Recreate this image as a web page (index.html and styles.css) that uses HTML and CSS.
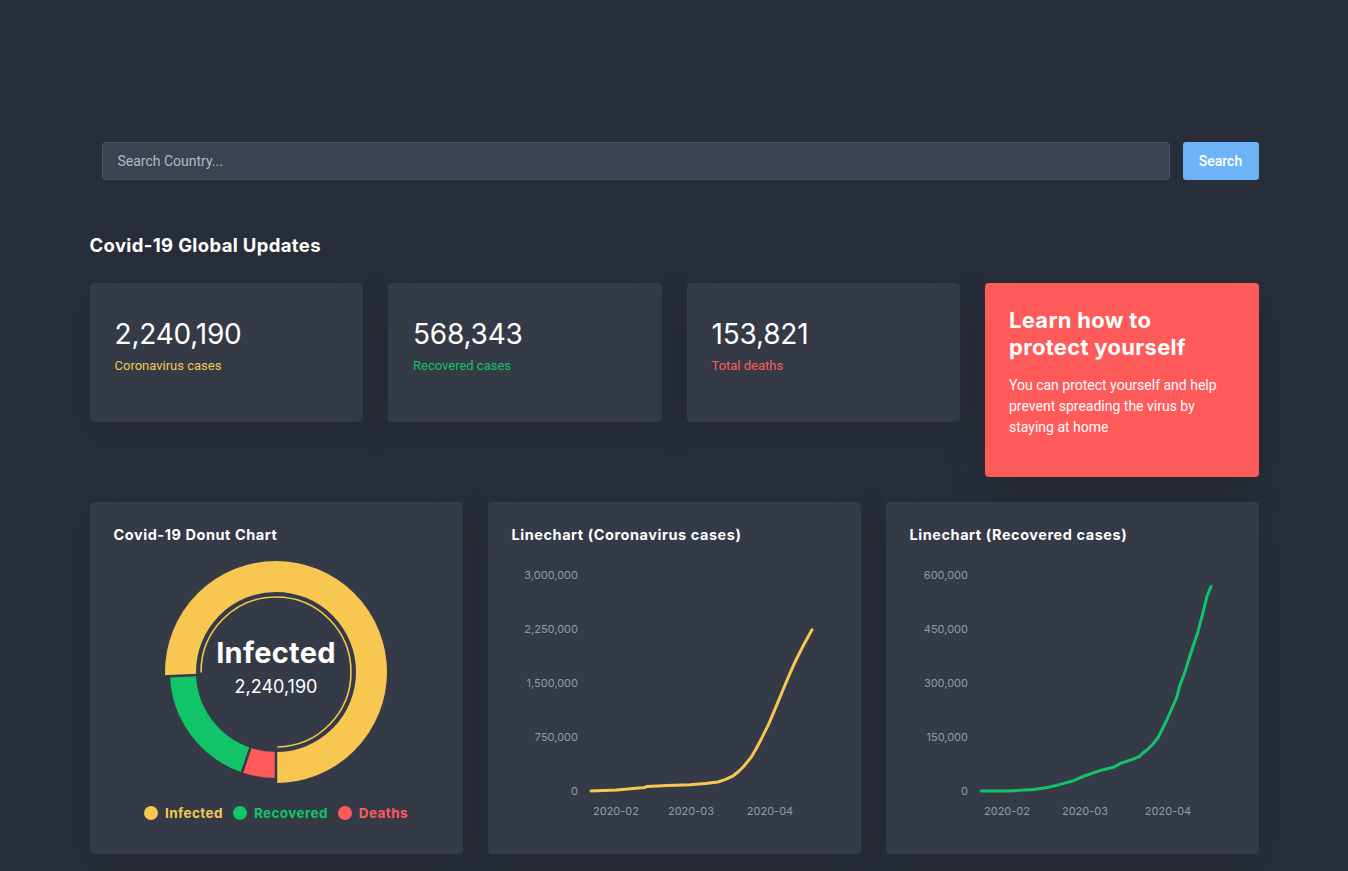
FILE: index.html
```html
<!DOCTYPE html>
<html lang="en">
<head>
<meta charset="utf-8">
<title>Covid-19 Global Updates</title>
<link rel="stylesheet" href="styles.css">
</head>
<body>
<main class="page">
  <form class="search" onsubmit="return false">
    <input class="search-input" type="text" placeholder="Search Country...">
    <button class="search-btn" type="submit">Search</button>
  </form>

  <h2 class="section-title">Covid-19 Global Updates</h2>

  <section class="stats">
    <div class="card stat">
      <div class="stat-num">2,240,190</div>
      <div class="stat-label yellow">Coronavirus cases</div>
    </div>
    <div class="card stat">
      <div class="stat-num">568,343</div>
      <div class="stat-label green">Recovered cases</div>
    </div>
    <div class="card stat">
      <div class="stat-num">153,821</div>
      <div class="stat-label red">Total deaths</div>
    </div>
    <div class="card promo">
      <h3 class="promo-title">Learn how to protect yourself</h3>
      <p class="promo-text">You can protect yourself and help prevent spreading the virus by staying at home</p>
    </div>
  </section>

  <section class="charts">
    <div class="card chart-card">
      <h4 class="chart-title">Covid-19 Donut Chart</h4>
      <div class="donut">
        <svg class="donut-svg" width="230" height="230" viewBox="0 0 230 230">
          <g transform="rotate(90 115 115)">
            <circle cx="115" cy="115" r="95.5" fill="none" stroke="#f7c752" stroke-width="31" stroke-dasharray="0 146.3 453.8 700"/>
            <circle cx="115" cy="115" r="93" fill="none" stroke="#12c468" stroke-width="26" stroke-dasharray="0 30.3 112.1 700"/>
            <circle cx="115" cy="115" r="93" fill="none" stroke="#ff5a5a" stroke-width="26" stroke-dasharray="30.3 700"/>
            <circle cx="115" cy="115" r="75" fill="none" stroke="#f7c752" stroke-width="1.6" stroke-dasharray="0 117 352 600"/>
          </g>
          <g stroke="#343a46" stroke-width="2.5">
            <line x1="115" y1="192" x2="115" y2="229"/>
            <line x1="90" y1="188.9" x2="78.8" y2="222"/>
            <line x1="37" y1="118" x2="1" y2="119.4"/>
          </g>
        </svg>
        <div class="donut-center">
          <div class="donut-label">Infected</div>
          <div class="donut-value">2,240,190</div>
        </div>
      </div>
      <ul class="legend">
        <li class="legend-item yellow"><span class="dot bg-yellow"></span>Infected</li>
        <li class="legend-item green"><span class="dot bg-green"></span>Recovered</li>
        <li class="legend-item red"><span class="dot bg-red"></span>Deaths</li>
      </ul>
    </div>

    <div class="card chart-card">
      <h4 class="chart-title">Linechart (Coronavirus cases)</h4>
      <svg class="line-svg" viewBox="0 0 372 270" width="372" height="270">
        <g class="axis" text-anchor="end">
          <text x="90" y="19">3,000,000</text>
          <text x="90" y="73">2,250,000</text>
          <text x="90" y="127">1,500,000</text>
          <text x="90" y="181">750,000</text>
          <text x="90" y="235">0</text>
        </g>
        <g class="axis" text-anchor="middle">
          <text x="128" y="255">2020-02</text>
          <text x="203" y="255">2020-03</text>
          <text x="282" y="255">2020-04</text>
        </g>
        <polyline fill="none" stroke="#f7c752" stroke-width="3" stroke-linejoin="round" stroke-linecap="round"
          points="103,231 128.4,230.1 153.8,227.8 157,227.4 158.9,226.4 179.2,225.6 202.1,224.8 217.3,223.6 230,222 237.6,219.4 245.2,215.8 250,212 255.4,206.7 263,197.4 268,189 273.2,179.2 280.8,163.9 291,139.6 297,125 303.7,109.3 308,100 316.4,83.4 324,69.7"/>
      </svg>
    </div>

    <div class="card chart-card">
      <h4 class="chart-title">Linechart (Recovered cases)</h4>
      <svg class="line-svg" viewBox="0 0 372 270" width="372" height="270">
        <g class="axis" text-anchor="end">
          <text x="82" y="19">600,000</text>
          <text x="82" y="73">450,000</text>
          <text x="82" y="127">300,000</text>
          <text x="82" y="181">150,000</text>
          <text x="82" y="235">0</text>
        </g>
        <g class="axis" text-anchor="middle">
          <text x="121" y="255">2020-02</text>
          <text x="199" y="255">2020-03</text>
          <text x="282" y="255">2020-04</text>
        </g>
        <polyline fill="none" stroke="#12c468" stroke-width="3" stroke-linejoin="round" stroke-linecap="round"
          points="95,231 121.4,230.9 147.9,229.6 161.1,227.6 174.3,224.4 187.5,220.6 198.1,216 214,210.6 227.2,207.3 235.1,203.2 245.7,199.7 253.6,196.5 256,193.8 261.6,189.5 267,184 272.1,177.5 280.1,161.5 285.4,149.6 290.7,137.4 294,125 298.6,112.9 303.9,96 311.8,72.2 317.1,52.1 321,36 325,26.5"/>
      </svg>
    </div>
  </section>
</main>
</body>
</html>
```

FILE: styles.css
```css
* { box-sizing: border-box; }

html, body {
  margin: 0;
  padding: 0;
}

body {
  background: #282e39;
  color: #ffffff;
  font-family: Roboto, "Liberation Sans", sans-serif;
  min-height: 871px;
}

.page {
  width: 1169px;
  margin: 0 auto;
  padding-top: 142px;
}

.search {
  display: flex;
  gap: 13px;
  padding-left: 12px;
  margin: 0;
}

.search-input {
  flex: 1;
  height: 38px;
  background: #3b4352;
  border: 1px solid #4a5262;
  border-radius: 4px;
  padding: 0 15px;
  color: #e4e7ec;
  font-family: Roboto, sans-serif;
  font-size: 14px;
  outline: none;
}

.search-input::placeholder {
  color: #b4bac4;
}

.search-btn {
  width: 76px;
  height: 38px;
  background: #6cb4f6;
  border: none;
  border-radius: 3px;
  color: #ffffff;
  font-family: Roboto, sans-serif;
  font-size: 14px;
  font-weight: 500;
  cursor: pointer;
}

.section-title {
  margin: 53px 0 0;
  font-family: Inter, "Open Sans", sans-serif;
  font-weight: 700;
  font-size: 18.5px;
  line-height: 24px;
  letter-spacing: 0.35px;
}

.stats {
  display: grid;
  grid-template-columns: repeat(4, 1fr);
  gap: 25px;
  align-items: start;
  margin-top: 26px;
}

.card {
  background: #343a46;
  border-radius: 4px;
  box-shadow: 0 12px 40px rgba(0, 0, 0, 0.12);
}

.stat {
  height: 139px;
  padding: 34px 25px 0;
}

.stat-num {
  font-family: Inter, "Open Sans", sans-serif;
  font-size: 28px;
  font-weight: 400;
  line-height: 34px;
  letter-spacing: -0.2px;
}

.stat-label {
  margin-top: 7px;
  font-size: 13px;
  line-height: 16px;
}

.yellow { color: #f7c752; }
.green { color: #12c468; }
.red { color: #ff5a5a; }

.bg-yellow { background: #f7c752; }
.bg-green { background: #12c468; }
.bg-red { background: #ff5a5a; }

.promo {
  background: #ff5a5a;
  height: 194px;
  padding: 24px 24px 0;
}

.promo-title {
  margin: 0;
  max-width: 190px;
  font-family: Inter, "Open Sans", sans-serif;
  font-weight: 700;
  font-size: 22px;
  line-height: 27px;
  letter-spacing: 0.3px;
}

.promo-text {
  margin: 14px 0 0;
  font-size: 14px;
  line-height: 21px;
}

.charts {
  display: grid;
  grid-template-columns: repeat(3, 1fr);
  gap: 25px;
  margin-top: 25px;
  padding-bottom: 20px;
}

.chart-card {
  height: 352px;
  padding: 23px 24px 0;
  overflow: hidden;
}

.chart-title {
  margin: 0;
  font-family: Inter, "Open Sans", sans-serif;
  font-weight: 700;
  font-size: 14.5px;
  line-height: 20px;
  letter-spacing: 0.55px;
}

.line-svg {
  display: block;
  margin: 15px 0 0 -24px;
}

.axis text {
  font-family: Inter, "Open Sans", sans-serif;
  font-size: 11px;
  fill: #8f9bae;
}

.donut {
  position: relative;
  width: 230px;
  height: 230px;
  margin: 12px auto 0;
}

.donut-svg {
  display: block;
}

.donut-center {
  position: absolute;
  inset: 0;
  display: flex;
  flex-direction: column;
  align-items: center;
  justify-content: center;
  padding-bottom: 10px;
}

.donut-label {
  font-family: Inter, "Open Sans", sans-serif;
  font-weight: 700;
  font-size: 29px;
  line-height: 34px;
  letter-spacing: 0.3px;
}

.donut-value {
  font-family: Inter, "Open Sans", sans-serif;
  font-size: 18px;
  line-height: 22px;
  margin-top: 6px;
}

.legend {
  list-style: none;
  margin: 16px 0 0;
  padding: 0;
  display: flex;
  justify-content: center;
  gap: 10px;
}

.legend-item {
  display: flex;
  align-items: center;
  gap: 7px;
  font-family: Inter, "Open Sans", sans-serif;
  font-weight: 700;
  font-size: 13.5px;
  line-height: 20px;
  letter-spacing: 0.4px;
}

.dot {
  width: 14px;
  height: 14px;
  border-radius: 50%;
  display: inline-block;
}
```
